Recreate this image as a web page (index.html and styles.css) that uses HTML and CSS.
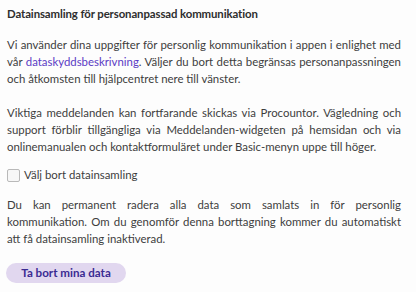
FILE: index.html
```html
<!DOCTYPE html>
<html lang="sv">
<head>
<meta charset="utf-8">
<link rel="stylesheet" href="styles.css">
</head>
<body>
<section class="panel">
  <h2 class="title">Datainsamling för personanpassad kommunikation</h2>
  <p class="text p1">Vi använder dina uppgifter för personlig kommunikation i appen i enlighet med vår <a class="link" href="#">dataskyddsbeskrivning</a>. Väljer du bort detta begränsas personanpassningen och åtkomsten till hjälpcentret nere till vänster.</p>
  <p class="text p2">Viktiga meddelanden kan fortfarande skickas via Procountor. Vägledning och support förblir tillgängliga via Meddelanden-widgeten på hemsidan och via onlinemanualen och kontaktformuläret under Basic-menyn uppe till höger.</p>
  <label class="check">
    <span class="box"></span>
    <span class="check-label">Välj bort datainsamling</span>
  </label>
  <p class="text p3">Du kan permanent radera alla data som samlats in för personlig kommunikation. Om du genomför denna borttagning kommer du automatiskt att få datainsamling inaktiverad.</p>
  <button class="btn" type="button">Ta bort mina data</button>
</section>
</body>
</html>
```
FILE: styles.css
```css
html, body {
  margin: 0;
  padding: 0;
  background: #fdfdfd;
}
body {
  font-family: "Lato", "Open Sans", sans-serif;
  font-size: 11.4px;
  color: #3d3d3d;
}
.panel {
  display: flex;
  flex-direction: column;
  align-items: flex-start;
  padding: 5px 15px 0 7px;
}
.title {
  margin: 0;
  font-size: 11.4px;
  font-weight: 700;
  line-height: 17px;
  color: #2e2e2e;
  letter-spacing: -0.1px;
}
.text {
  margin: 0;
  line-height: 17px;
  text-align: justify;
  align-self: stretch;
}
.p1 { margin-top: 14px; }
.p2 { margin-top: 17px; }
.p3 { margin-top: 13px; }
.link {
  color: #5b3cc4;
  text-decoration: none;
}
.check {
  margin-top: 11px;
  display: flex;
  align-items: center;
  gap: 4px;
  height: 17px;
  line-height: 17px;
}
.box {
  width: 11px;
  height: 11px;
  border: 1px solid #b9b9b9;
  border-radius: 2px;
  background: #f7f7f7;
  margin-top: 1px;
}
.check-label {
  color: #3d3d3d;
}
.btn {
  margin-top: 16px;
  margin-left: -1px;
  width: 120px;
  height: 20px;
  border: none;
  border-radius: 10px;
  background: #e1d7ef;
  color: #3a2b92;
  font-family: "Lato", "Open Sans", sans-serif;
  font-size: 11.6px;
  font-weight: 700;
  padding: 0;
  line-height: 20px;
}
```
